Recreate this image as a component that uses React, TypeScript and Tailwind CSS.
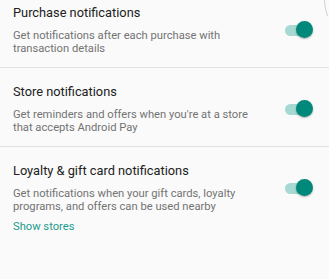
import React from "react";

function Toggle() {
  return (
    <div className="relative w-[28px] h-[18px] flex items-center shrink-0">
      <div className="w-[27px] h-[11px] rounded-full bg-[#a6d9d3]" />
      <div className="absolute right-0 top-0 w-[17px] h-[17px] rounded-full bg-[#00897b] shadow-[0_1px_2px_rgba(0,0,0,0.3)]" />
    </div>
  );
}

function Row({
  title,
  desc,
  top,
  link,
}: {
  title: string;
  desc: string;
  top: string;
  link?: string;
}) {
  return (
    <div className={`${top} pb-[12px] pl-[13px] pr-[16px]`}>
      <div className="flex items-center">
        <div className="w-[248px]">
          <div className="text-[12.8px] leading-[16px] text-[#212121]">{title}</div>
          <div className="mt-2 text-[11.2px] leading-[13px] text-[#737373]">{desc}</div>
        </div>
        <div className="flex-1" />
        <Toggle />
      </div>
      {link && (
        <div className="mt-[7px] text-[11.2px] leading-[13px] text-[#1a9c8e]">{link}</div>
      )}
    </div>
  );
}

export default function App() {
  return (
    <div
      className="relative w-[329px] h-[279px] bg-[#fafafa] overflow-hidden"
      style={{ fontFamily: "Roboto, 'Noto Sans', sans-serif" }}
    >
      <Row
        top="pt-[5px]"
        title="Purchase notifications"
        desc="Get notifications after each purchase with transaction details"
      />
      <div className="h-px bg-[#e2e2e2]" />
      <Row
        top="pt-[16px]"
        title="Store notifications"
        desc="Get reminders and offers when you're at a store that accepts Android Pay"
      />
      <div className="h-px bg-[#e2e2e2]" />
      <Row
        top="pt-[16px]"
        title="Loyalty & gift card notifications"
        desc="Get notifications when your gift cards, loyalty programs, and offers can be used nearby"
        link="Show stores"
      />
      <svg className="absolute right-0 top-0" width="8" height="18" viewBox="0 0 8 18">
        <path d="M3.3 0 Q4 9 6.5 16" stroke="#c8c8c8" strokeWidth="0.8" fill="none" />
      </svg>
    </div>
  );
}
